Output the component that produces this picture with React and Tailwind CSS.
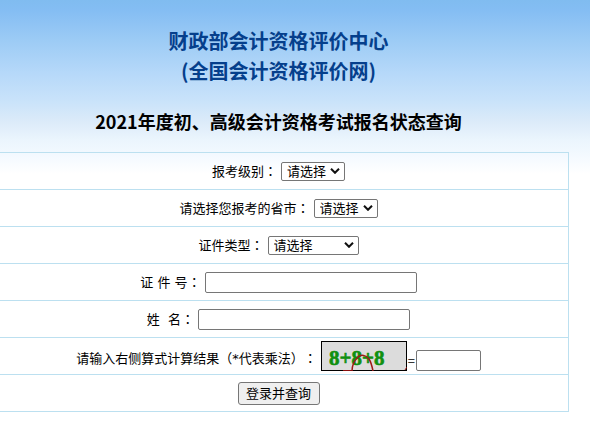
import clsx from "clsx";

function Row({ children, className }) {
  return (
    <tr className="border-b border-[#bce0f0]">
      <td className="h-[37px] p-0">
        <div className={clsx("flex justify-center gap-1", className || "items-center")}>
          {children}
        </div>
      </td>
    </tr>
  );
}

function Label({ htmlFor, children, className }) {
  return (
    <label
      htmlFor={htmlFor}
      className={clsx(
        "font-['DejaVu_Sans','Noto_Sans_CJK_SC',sans-serif] whitespace-pre",
        className || "leading-5"
      )}
    >
      {children}
      <span className="font-['Noto_Sans_CJK_TC',sans-serif]">：</span>
    </label>
  );
}

function Select({ id, className }) {
  return (
    <span className="relative flex">
      <select
        id={id}
        className={clsx(
          "h-[19px] appearance-none rounded-xs border border-[#767676] bg-white pl-[5px] leading-4",
          className
        )}
      >
        <option>请选择</option>
      </select>
      <svg
        viewBox="0 0 10 6"
        className="pointer-events-none absolute top-[6px] right-[5px] h-[6px] w-[10px]"
        fill="none"
        stroke="#101010"
        strokeWidth="2"
      >
        <path d="M1 0.8 L5 4.8 L9 0.8" />
      </svg>
    </span>
  );
}

function TextBox({ id, className, ...props }) {
  return (
    <input
      id={id}
      type="text"
      className={clsx("h-[21px] rounded-xs border border-[#767676] bg-white px-1", className)}
      {...props}
    />
  );
}

function Captcha() {
  return (
    <svg viewBox="0 0 86 30" className="h-[30px] w-[86px]" role="img" aria-label="8+8+8">
      <rect x="0.5" y="0.5" width="85" height="29" fill="#dcdcdc" stroke="#000" />
      <text
        x="8"
        y="24"
        fill="#109010"
        stroke="#109010"
        strokeWidth="0.6"
        fontFamily="'Liberation Serif', serif"
        fontWeight="700"
        fontSize="21"
      >
        8+8+8
      </text>
      <path
        d="M31 30 C31 23 34 19 37 16 C40 13 45 14 48 18 C50 21 51 25 52 30"
        fill="none"
        stroke="#a01818"
        strokeWidth="1.5"
      />
      <path d="M22 29.5 H31 M84 29 L86 26" stroke="#8b1010" fill="none" />
    </svg>
  );
}

function App() {
  return (
    <div className="min-h-screen overflow-hidden bg-white bg-[linear-gradient(to_bottom,#80bcf0_0px,#84bdf3_10px,#9ccbf5_40px,#b5d8f9_72px,#cae3fa_102px,#dcebf9_122px,#ebf5fd_140px,#f5faff_158px,#ffffff_174px)] font-['Noto_Sans_CJK_SC',sans-serif] text-[13px] text-black [text-spacing-trim:space-all]">
      <main className="-ml-3 mr-[21px] pt-[26px]">
        <h1 className="text-center text-[20px] leading-[30px] font-bold text-[#053f8c]">
          财政部会计资格评价中心
          <br />
          (全国会计资格评价网)
        </h1>
        <h2 className="mt-5 mb-4 text-center text-[18px] leading-[30px] font-bold">
          2021年度初、高级会计资格考试报名状态查询
        </h2>

        <form onSubmit={(e) => e.preventDefault()}>
          <table className="w-full border-collapse border border-[#bce0f0]">
            <tbody>
              <Row>
                <Label htmlFor="level">报考级别</Label>
                <Select id="level" className="w-16" />
              </Row>
              <Row>
                <Label htmlFor="province">请选择您报考的省市</Label>
                <Select id="province" className="w-16" />
              </Row>
              <Row>
                <Label htmlFor="cardType">证件类型</Label>
                <Select id="cardType" className="w-[91px]" />
              </Row>
              <Row>
                <Label htmlFor="cardNo">证 件 号</Label>
                <TextBox id="cardNo" className="w-[212px]" />
              </Row>
              <Row>
                <Label htmlFor="name">{"姓  名"}</Label>
                <TextBox id="name" className="w-[212px]" />
              </Row>
              <Row className="items-end">
                <Label htmlFor="answer" className="leading-6">
                  请输入右侧算式计算结果（*代表乘法）
                </Label>
                <Captcha />
                <span className="-ml-1 flex items-center">
                  <span className="px-px">=</span>
                  <TextBox id="answer" className="w-[65px]" />
                </span>
              </Row>
              <Row>
                <button
                  type="submit"
                  className="h-[23px] w-[82px] rounded-[3px] border border-[#767676] bg-[#efefef] leading-5"
                >
                  登录并查询
                </button>
              </Row>
            </tbody>
          </table>
        </form>
      </main>
    </div>
  );
}

export default App;
